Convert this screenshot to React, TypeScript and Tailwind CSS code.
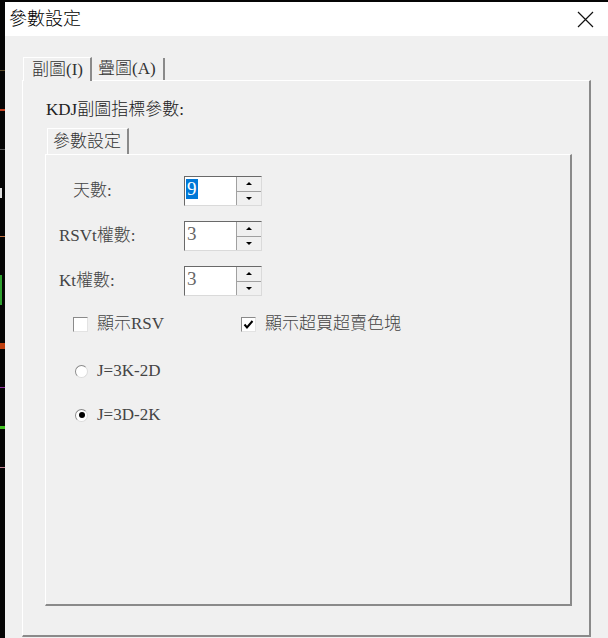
import React from "react";

const FONT = "font-['Liberation_Serif','Noto_Sans_CJK_TC',serif] font-light";

function SpinBox({ value, selected }: { value: string; selected?: boolean }) {
  return (
    <div className="flex w-[78px] h-[30px] border border-t-[#696969] border-l-[#696969] border-r-[#dadada] border-b-[#dadada] bg-white">
      <div className="flex-1 pl-[1px] pt-[1px]">
        {selected ? (
          <span className="inline-block bg-[#0078d7] text-white text-[19px] leading-[20px] px-[1px]">{value}</span>
        ) : (
          <span className="inline-block text-[#666] text-[19px] leading-[20px] px-[1px]">{value}</span>
        )}
      </div>
      <div className="flex flex-col w-[25px] border-l border-[#a0a0a0]">
        <div className="flex-1 flex items-center justify-center bg-[#f0f0f0] border-b border-[#a0a0a0]">
          <span className="w-0 h-0 border-l-[3px] border-r-[3px] border-b-[3px] border-l-transparent border-r-transparent border-b-black" />
        </div>
        <div className="flex-1 flex items-center justify-center bg-[#f0f0f0]">
          <span className="w-0 h-0 border-l-[3px] border-r-[3px] border-t-[3px] border-l-transparent border-r-transparent border-t-black" />
        </div>
      </div>
    </div>
  );
}

function CheckBox({ checked, label }: { checked?: boolean; label: string }) {
  return (
    <div className="flex items-center">
      <span className="w-[15px] h-[15px] bg-white border border-t-[#8a8a8a] border-l-[#8a8a8a] border-r-[#e3e3e3] border-b-[#e3e3e3] flex items-center justify-center">
        {checked && (
          <svg width="11" height="11" viewBox="0 0 11 11">
            <path d="M1.5 5.5 L4 8.5 L9.5 2" fill="none" stroke="#000" strokeWidth="2" />
          </svg>
        )}
      </span>
      <span className="ml-[9px] text-[#444] text-[17px] leading-[20px]">{label}</span>
    </div>
  );
}

function Radio({ checked, label }: { checked?: boolean; label: string }) {
  return (
    <div className="flex items-center pl-[2px]">
      <span className="w-[13px] h-[13px] rounded-full bg-white border border-t-[#8a8a8a] border-l-[#8a8a8a] border-r-[#dcdcdc] border-b-[#dcdcdc] flex items-center justify-center">
        {checked && <span className="w-[6px] h-[6px] rounded-full bg-black" />}
      </span>
      <span className="ml-[9px] text-[#444] text-[17px] leading-[20px]">{label}</span>
    </div>
  );
}

export default function App() {
  return (
    <div className={`w-[608px] h-[638px] bg-[#050505] flex overflow-hidden ${FONT}`}>
      {/* chart behind the dialog */}
      <div className="w-[5px] flex flex-col pt-[70px] gap-[38px]">
        <span className="h-[1px] bg-[#5a4a2a]" />
        <span className="h-[2px] bg-[#c04020]" />
        <span className="h-[1px] bg-[#555]" />
        <span className="h-[10px] bg-[#ddd] w-[2px]" />
        <span className="h-[1px] bg-[#c07040]" />
        <span className="h-[30px] w-[2px] bg-[#2fa02f]" />
        <span className="h-[6px] bg-[#c04010]" />
        <span className="h-[1px] bg-[#9030a0]" />
        <span className="h-[3px] bg-[#40c020]" />
        <span className="h-[1px] bg-[#c08090]" />
      </div>

      <div className="flex-1 flex flex-col mt-[2px]">
        {/* title bar */}
        <div className="h-[34px] bg-white flex items-center justify-between pl-[4px] pr-[14px]">
          <span className="text-black text-[18px] leading-[20px]">參數設定</span>
          <svg width="17" height="17" viewBox="0 0 17 17">
            <path d="M1 1 L16 16 M16 1 L1 16" stroke="#111" strokeWidth="1.2" />
          </svg>
        </div>

        {/* body */}
        <div className="flex-1 bg-[#f0f0f0] flex flex-col pl-[17px] pr-[17px] pt-[20px] pb-[1px]">
          {/* outer tabs */}
          <div className="flex items-end h-[24px]">
            <div className="h-[24px] pl-[8px] pr-[7px] flex items-center ml-[1px] bg-[#f0f0f0] border-l border-t border-white border-r-2 border-r-[#8a8a8a] text-[#333] text-[17px] relative top-[1px]">
              副圖(I)
            </div>
            <div className="h-[22px] pl-[6px] pr-[7px] flex items-center border-r-2 border-r-[#8a8a8a] text-[#333] text-[17px]">
              疊圖(A)
            </div>
          </div>

          {/* outer panel */}
          <div className="flex-1 border-l border-t border-white border-r-2 border-b-2 border-r-[#8a8a8a] border-b-[#8a8a8a] flex flex-col pl-[22px] pr-[17px] pt-[19px] pb-[29px]">
            <div className="text-[#222] text-[17px] leading-[20px] pl-[1px]">KDJ副圖指標參數:</div>

            {/* inner tab */}
            <div className="flex mt-[8px] h-[26px]">
              <div className="h-[26px] ml-[2px] pl-[5px] pr-[6px] flex items-center border-l border-t border-white border-r-2 border-r-[#8a8a8a] text-[#333] text-[17px]">
                參數設定
              </div>
            </div>

            {/* inner panel */}
            <div className="flex-1 border-l border-t border-white border-r-2 border-b-2 border-r-[#8a8a8a] border-b-[#8a8a8a] flex flex-col pt-[21px]">
              <div className="flex items-center h-[30px]">
                <div className="w-[138px] pl-[27px] text-[#444] text-[17px]">天數:</div>
                <SpinBox value="9" selected />
              </div>
              <div className="flex items-center h-[30px] mt-[15px]">
                <div className="w-[138px] pl-[13px] text-[#444] text-[17px]">RSVt權數:</div>
                <SpinBox value="3" />
              </div>
              <div className="flex items-center h-[30px] mt-[15px]">
                <div className="w-[138px] pl-[13px] text-[#444] text-[17px]">Kt權數:</div>
                <SpinBox value="3" />
              </div>

              <div className="flex items-center mt-[18px] pl-[27px]">
                <div className="w-[168px]">
                  <CheckBox label="顯示RSV" />
                </div>
                <CheckBox checked label="顯示超買超賣色塊" />
              </div>

              <div className="mt-[27px] pl-[27px]">
                <Radio label="J=3K-2D" />
              </div>
              <div className="mt-[24px] pl-[27px]">
                <Radio checked label="J=3D-2K" />
              </div>
            </div>
          </div>
        </div>
      </div>
    </div>
  );
}
